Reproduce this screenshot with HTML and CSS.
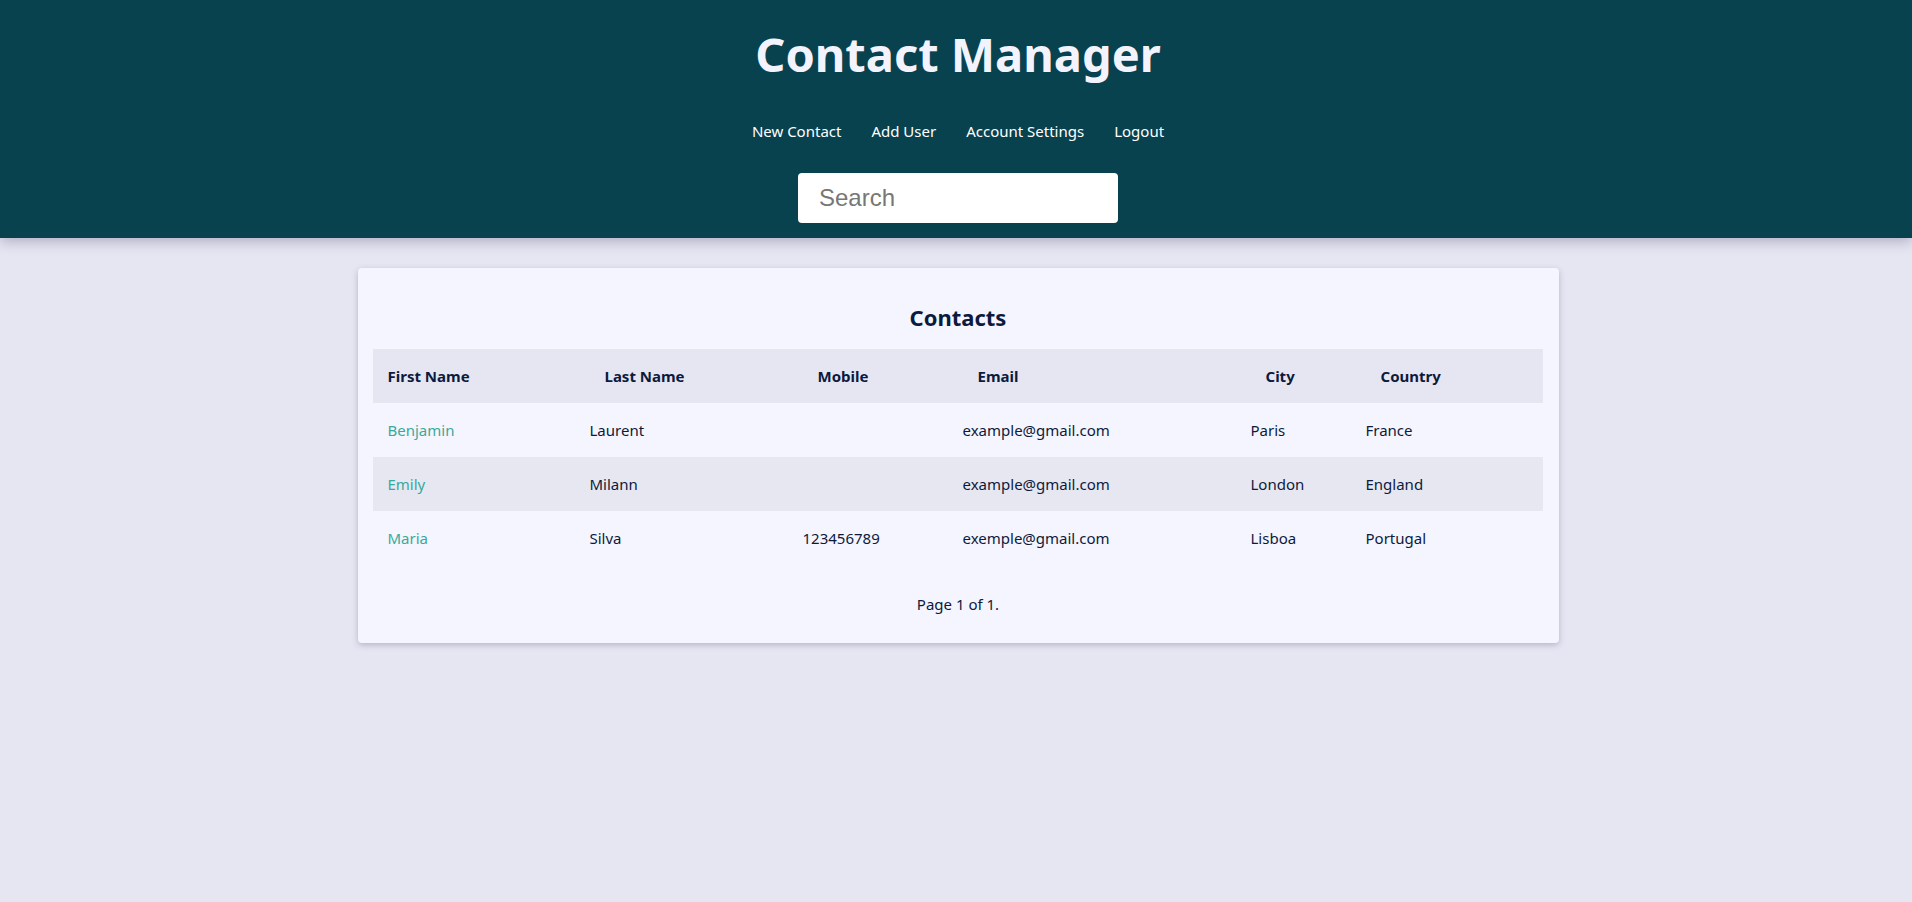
FILE: index.html
```html
<!DOCTYPE html>
<html lang="en">
<head>
<meta charset="utf-8">
<title>Contact Manager</title>
<link rel="stylesheet" href="styles.css">
</head>
<body>
<header class="topbar">
  <h1 class="brand">Contact Manager</h1>
  <nav class="nav">
    <a href="#">New Contact</a>
    <a href="#">Add User</a>
    <a href="#">Account Settings</a>
    <a href="#">Logout</a>
  </nav>
  <input class="search" type="text" placeholder="Search">
</header>
<main class="main">
  <section class="card">
    <h2 class="card-title">Contacts</h2>
    <table class="contacts">
      <colgroup>
        <col class="c1"><col class="c2"><col class="c3"><col class="c4"><col class="c5"><col class="c6">
      </colgroup>
      <thead>
        <tr><th>First Name</th><th>Last Name</th><th>Mobile</th><th>Email</th><th>City</th><th>Country</th></tr>
      </thead>
      <tbody>
        <tr><td><a href="#">Benjamin</a></td><td>Laurent</td><td></td><td>example@gmail.com</td><td>Paris</td><td>France</td></tr>
        <tr><td><a href="#">Emily</a></td><td>Milann</td><td></td><td>example@gmail.com</td><td>London</td><td>England</td></tr>
        <tr><td><a href="#">Maria</a></td><td>Silva</td><td>123456789</td><td>exemple@gmail.com</td><td>Lisboa</td><td>Portugal</td></tr>
      </tbody>
    </table>
    <p class="pager">Page 1 of 1.</p>
  </section>
</main>
</body>
</html>
```
FILE: styles.css
```css
html, body {
  margin: 0;
  padding: 0;
}
body {
  background: #e6e6f3;
  font-family: "Noto Sans", "Open Sans", sans-serif;
  color: #0d1a3c;
  min-height: 902px;
}
.topbar {
  background: #08424f;
  height: 238px;
  box-sizing: border-box;
  padding-left: 4px;
  display: flex;
  flex-direction: column;
  align-items: center;
  box-shadow: 0 4px 12px rgba(20, 20, 60, 0.25);
  position: relative;
  z-index: 1;
}
.brand {
  margin: 19px 0 0;
  font-size: 47px;
  line-height: 70px;
  font-weight: 700;
  color: #f3f3fd;
}
.nav {
  display: flex;
  gap: 30px;
  margin-top: 31px;
  line-height: 22px;
}
.nav a {
  color: #ffffff;
  text-decoration: none;
  font-size: 15px;
}
.search {
  margin-top: 31px;
  width: 320px;
  height: 50px;
  box-sizing: border-box;
  border: none;
  border-radius: 4px;
  padding: 0 21px;
  font-family: "Liberation Sans", Arial, sans-serif;
  font-size: 24px;
  background: #ffffff;
  outline: none;
}
.search::placeholder {
  color: #777777;
}
.main {
  padding: 30px 0 0 4px;
  display: flex;
  justify-content: center;
}
.card {
  width: 1201px;
  box-sizing: border-box;
  padding: 15px 15px 0;
  background: #f4f5fe;
  border-radius: 4px;
  box-shadow: 0 2px 6px rgba(30, 30, 70, 0.25);
  display: flex;
  flex-direction: column;
}
.card-title {
  margin: 19px 0 17px;
  text-align: center;
  font-size: 22px;
  line-height: 30px;
  font-weight: 700;
  color: #0d1a3c;
}
.contacts {
  width: 1170px;
  border-collapse: collapse;
  table-layout: fixed;
  font-size: 15px;
}
.c1 { width: 202px; }
.c2 { width: 213px; }
.c3 { width: 160px; }
.c4 { width: 288px; }
.c5 { width: 115px; }
.c6 { width: 192px; }
.contacts thead tr {
  background: #e6e6f3;
}
.contacts th {
  height: 54px;
  padding: 0 15px 0 30px;
  text-align: left;
  font-weight: 700;
}
.contacts th:first-child {
  padding-left: 15px;
}
.contacts td {
  height: 54px;
  padding: 0 15px;
  font-weight: 400;
}
.contacts tbody tr:nth-child(2) {
  background: #e7e7f2;
}
.contacts a {
  color: #3aa99c;
  text-decoration: none;
}
.pager {
  margin: 0;
  height: 78px;
  display: flex;
  align-items: center;
  justify-content: center;
  font-size: 15px;
}
```
